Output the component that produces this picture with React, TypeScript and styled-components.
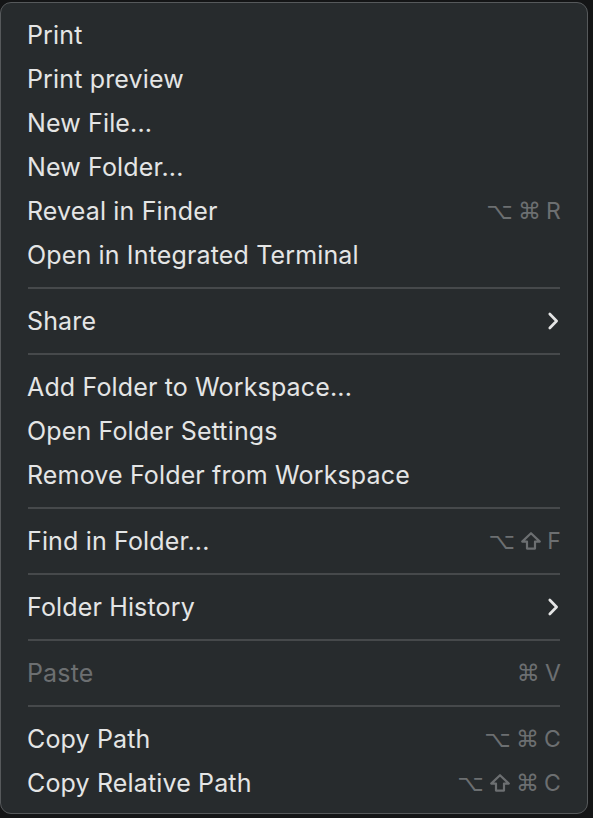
import styled, { createGlobalStyle } from "styled-components";

const colors = {
  page: "#141516",
  panel: "#272b2d",
  border: "#56595b",
  text: "#e4e5e5",
  muted: "#6c6f71",
  line: "#46494b",
};

const GlobalStyle = createGlobalStyle`
  html, body {
    margin: 0;
    padding: 0;
    background: ${colors.page};
  }
  body {
    font-family: Inter, "Noto Sans", "DejaVu Sans", sans-serif;
    -webkit-font-smoothing: antialiased;
  }
`;

const Page = styled.div`
  width: 593px;
  height: 818px;
  padding: 2px 5px 4px 0;
  box-sizing: border-box;
`;

const Menu = styled.div`
  box-sizing: border-box;
  width: 588px;
  height: 812px;
  background: ${colors.panel};
  border: 1px solid ${colors.border};
  border-radius: 11px;
  padding: 10px 27px 8px 26px;
  display: flex;
  flex-direction: column;
`;

const Item = styled.div<{ $disabled?: boolean }>`
  height: 44px;
  display: flex;
  align-items: center;
  justify-content: space-between;
  font-size: 25px;
  letter-spacing: 0.15px;
  color: ${(p) => (p.$disabled ? colors.muted : colors.text)};
`;

const Shortcut = styled.span`
  display: flex;
  align-items: center;
  gap: 5px;
  color: ${colors.muted};
  font-size: 23px;
  font-family: "DejaVu Sans", Inter, sans-serif;
  margin-right: -1px;
`;

const Key = styled.span`
  font-family: Inter, "DejaVu Sans", sans-serif;
`;

const Separator = styled.div`
  height: 2px;
  margin: 10px 0 10px 1px;
  background: ${colors.line};
`;

const Chevron = () => (
  <svg width="12" height="18" viewBox="0 0 12 18" style={{ marginRight: 1 }}>
    <path
      d="M2.8 2 L9.6 9 L2.8 16"
      fill="none"
      stroke={colors.text}
      strokeWidth="2.7"
      strokeLinecap="round"
      strokeLinejoin="round"
    />
  </svg>
);

const ShiftIcon = () => (
  <svg width="22" height="20" viewBox="0 0 22 20">
    <path
      d="M11 2.2 L19.8 10.6 H15 V17.6 H7 V10.6 H2.2 Z"
      fill="none"
      stroke={colors.muted}
      strokeWidth="2.2"
      strokeLinejoin="round"
    />
  </svg>
);

type Entry =
  | { kind: "sep" }
  | { kind: "item"; label: string; keys?: string[]; sub?: boolean; disabled?: boolean };

const entries: Entry[] = [
  { kind: "item", label: "Print" },
  { kind: "item", label: "Print preview" },
  { kind: "item", label: "New File..." },
  { kind: "item", label: "New Folder..." },
  { kind: "item", label: "Reveal in Finder", keys: ["⌥", "⌘", "R"] },
  { kind: "item", label: "Open in Integrated Terminal" },
  { kind: "sep" },
  { kind: "item", label: "Share", sub: true },
  { kind: "sep" },
  { kind: "item", label: "Add Folder to Workspace..." },
  { kind: "item", label: "Open Folder Settings" },
  { kind: "item", label: "Remove Folder from Workspace" },
  { kind: "sep" },
  { kind: "item", label: "Find in Folder...", keys: ["⌥", "⇧", "F"] },
  { kind: "sep" },
  { kind: "item", label: "Folder History", sub: true },
  { kind: "sep" },
  { kind: "item", label: "Paste", keys: ["⌘", "V"], disabled: true },
  { kind: "sep" },
  { kind: "item", label: "Copy Path", keys: ["⌥", "⌘", "C"] },
  { kind: "item", label: "Copy Relative Path", keys: ["⌥", "⇧", "⌘", "C"] },
];

const renderKey = (k: string, j: number) => {
  if (k === "⇧") return <ShiftIcon key={j} />;
  if (/[A-Z]/.test(k)) return <Key key={j}>{k}</Key>;
  return <span key={j}>{k}</span>;
};

export default function App() {
  return (
    <>
      <GlobalStyle />
      <Page>
        <Menu>
          {entries.map((e, i) =>
            e.kind === "sep" ? (
              <Separator key={i} />
            ) : (
              <Item key={i} $disabled={e.disabled}>
                <span>{e.label}</span>
                {e.keys && <Shortcut>{e.keys.map(renderKey)}</Shortcut>}
                {e.sub && <Chevron />}
              </Item>
            )
          )}
        </Menu>
      </Page>
    </>
  );
}
